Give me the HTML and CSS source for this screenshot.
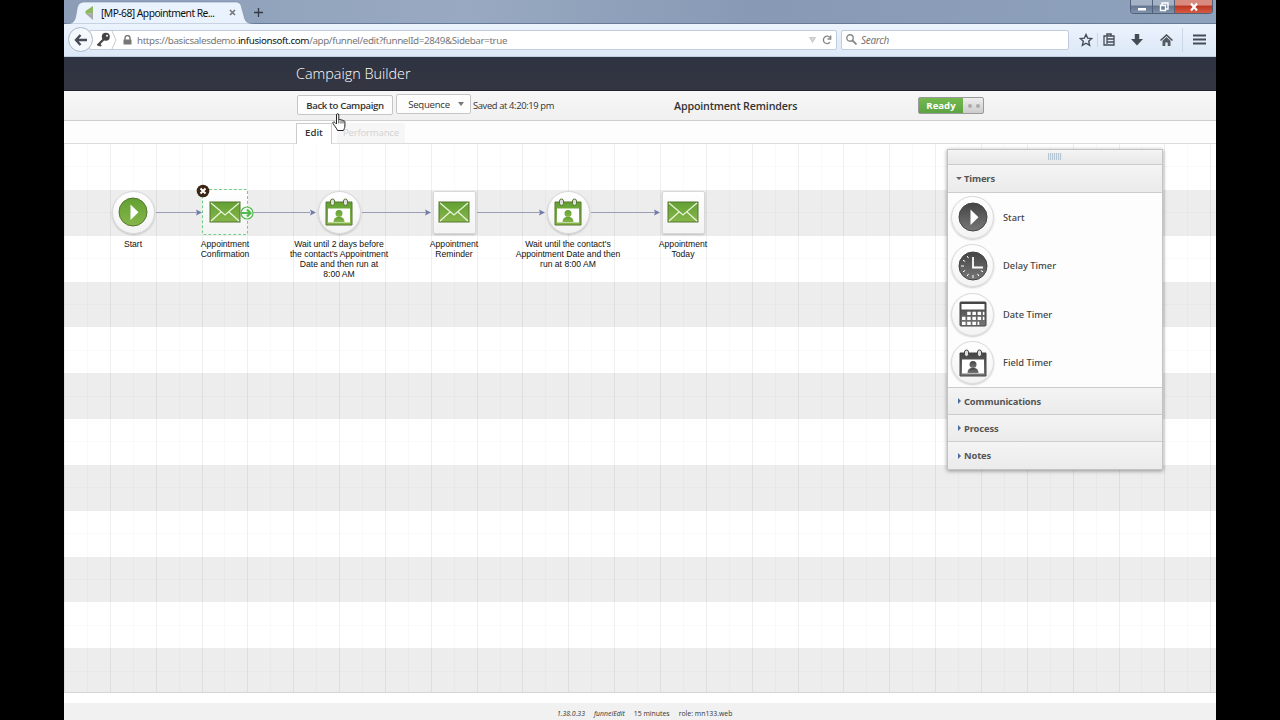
FILE: index.html
```html
<!DOCTYPE html>
<html lang="en">
<head>
    <meta charset="utf-8">
    <title>Campaign Builder</title>
    <link rel="stylesheet" href="styles.css">
</head>
<body>
    <!-- shared icon shapes -->
    <svg class="defs" width="0" height="0">
        <defs>
            <linearGradient id="greenFill" x1="0" y1="0" x2="0" y2="1">
                <stop offset="0" stop-color="#62a032"/>
                <stop offset="1" stop-color="#87b64a"/>
            </linearGradient>
            <linearGradient id="greyFill" x1="0" y1="0" x2="0" y2="1">
                <stop offset="0" stop-color="#444"/>
                <stop offset="1" stop-color="#777"/>
            </linearGradient>
        </defs>
        <symbol id="play" viewBox="0 0 30 30">
            <circle class="fill line" cx="15" cy="15" r="14"/>
            <path d="M12.500 7.500v15.500l8-7.700z" fill="#fff"/>
        </symbol>
        <symbol id="mail" viewBox="0 0 32 22">
            <rect class="fill line" x="1" y="1" width="30" height="20"/>
            <path d="M2 2l14 12L30 2M2 20l10-9M30 20l-10-9" fill="none" stroke="#e9f3dd" stroke-width="1.300"/>
        </symbol>
        <symbol id="contact" viewBox="0 0 28 28">
            <path class="fill line" d="M1 4h26v23H1z"/>
            <rect x="3" y="10.500" width="22" height="14" fill="#fff"/>
            <rect class="line" x="5.500" y="1" width="4" height="6.500" rx="2" fill="#dedede"/>
            <rect class="line" x="18.500" y="1" width="4" height="6.500" rx="2" fill="#dedede"/>
            <circle class="fill" cx="14" cy="15.500" r="3.500"/>
            <path class="fill" d="M8.500 24c0-3 1.500-4.500 4-5h3c2.500 .5 4 2 4 5z"/>
        </symbol>
        <symbol id="clock" viewBox="0 0 30 30">
            <circle class="fill line" cx="15" cy="15" r="14"/>
            <path d="M15 6v10.500h10" fill="none" stroke="#fff" stroke-width="1.800"/>
            <path d="M15 24v3M3 15h3M19.500 22.800l1.300 2.200M10.500 22.800l-1.300 2.200M7.200 19.500L5 20.800M22.800 19.500l2.200 1.300M7.200 10.500L5 9.200M10.500 7.200L9.200 5" fill="none" stroke="#fff"/>
        </symbol>
        <symbol id="calendar" viewBox="0 0 28 26">
            <rect class="fill line" x="1" y="1" width="26" height="24" rx="1"/>
            <rect x="2.500" y="3" width="23" height="5.500" fill="#fff"/>
            <path d="M8.200 12.300h17.200M3 17.300h22.400M3 22.300h17.200" stroke="#fff" stroke-width="3.300" stroke-dasharray="3.500 1.700" fill="none"/>
        </symbol>
    </svg>

    <div class="window">
        <div class="titlebar">
            <svg class="tab-shape" width="200" height="24" viewBox="0 0 200 24">
                <path d="M0 24c7 0 9-3 10-9l1-6c1-5 3-7 8-7h150c5 0 6 2 7 7l2 7c1 6 4 8 11 8z" fill="#eaf2fd" stroke="#7b8ca6" stroke-width=".6"/>
            </svg>
            <div class="tab">
                <svg width="9" height="14" viewBox="0 0 9 14">
                    <path d="M8 0v7L1 8C0 6 0 5 2 4z" fill="#8cb75b"/>
                    <path d="M1 8l7-1v7z" fill="#a9aaa7"/>
                </svg>
                <span class="tab-title">[MP-68] Appointment Re...</span>
                <svg width="7" height="7" viewBox="0 0 7 7"><path d="M1 1l5 5M6 1L1 6" stroke="#777" stroke-width="1.700"/></svg>
                <svg class="new-tab" width="9" height="9" viewBox="0 0 9 9"><path d="M4.500 0v9M0 4.500h9" stroke="#333a45" stroke-width="1.300"/></svg>
            </div>
            <div class="window-buttons">
                <span class="win-btn"><svg width="10" height="10" viewBox="0 0 10 10"><rect x="1" y="6" width="8" height="2.500" fill="#fff"/></svg></span>
                <span class="win-btn"><svg width="10" height="10" viewBox="0 0 10 10"><path d="M3 3V1h6v6H7M1.500 3.500h5v5h-5z" fill="none" stroke="#fff" stroke-width="1.400"/></svg></span>
                <span class="win-btn close"><svg width="10" height="10" viewBox="0 0 10 10"><path d="M2 1.500l6 7M8 1.500l-6 7" stroke="#fff" stroke-width="2.200"/></svg></span>
            </div>
        </div>

        <div class="toolbar">
            <span class="back"><svg width="14" height="12" viewBox="0 0 14 12"><path d="M6.500 1L2 6l4.500 5M2 6h11" fill="none" stroke="#454c55" stroke-width="2.400"/></svg></span>
            <div class="address">
                <svg width="15" height="15" viewBox="0 0 15 15"><circle cx="9.800" cy="4.800" r="4" fill="#444"/><circle cx="11" cy="3.800" r="1" fill="#fff"/><path d="M7.500 7.500L1.500 13.500M3 12l2 2" stroke="#444" stroke-width="2.200"/></svg>
                <svg class="chevron" width="6" height="18" viewBox="0 0 6 18"><path d="M1 0l4 9-4 9" fill="none" stroke="#c7cbd1"/></svg>
                <svg class="lock" width="9" height="10" viewBox="0 0 9 10"><path d="M2 5V3a2.500 2.500 0 0 1 5 0v2" fill="none" stroke="#777" stroke-width="1.400"/><rect x=".5" y="4.500" width="8" height="5" rx=".5" fill="#777"/></svg>
                <span class="url">https://basicsalesdemo.<b>infusionsoft.com</b>/app/funnel/edit?funnelId=2849&amp;Sidebar=true</span>
                <svg class="drop" width="7" height="6" viewBox="0 0 7 6"><path d="M.5.5h6l-3 5z" fill="#d5d5d5" stroke="#bbb" stroke-width=".7"/></svg>
                <svg width="10" height="10" viewBox="0 0 10 10"><path d="M8 7.200A3.700 3.700 0 1 1 8 2.600M8.700.5v3.500H5.500" fill="none" stroke="#858585" stroke-width="1.300"/></svg>
            </div>
            <div class="search">
                <svg width="11" height="11" viewBox="0 0 11 11"><circle cx="4" cy="4" r="3.200" fill="none" stroke="#888" stroke-width="1.400"/><path d="M6.500 6.500l4 4" stroke="#888" stroke-width="1.800"/></svg>
                <span>Search</span>
            </div>
            <div class="tools">
                <svg width="14" height="14" viewBox="0 0 14 14"><path d="M7 1.500l1.700 3.700 4 .4-3 2.700.9 4L7 10.200l-3.600 2.100.9-4-3-2.700 4-.4z" fill="none" stroke="#454c55" stroke-width="1.400"/></svg>
                <i class="divider"></i>
                <svg width="12" height="13" viewBox="0 0 12 13"><path d="M1 3h10v9H1zM3.500 6h7M3.500 9h7M4 4v7" fill="none" stroke="#454c55" stroke-width="1.300"/><path d="M4 3V1h4v2" fill="none" stroke="#454c55" stroke-width="1.500"/></svg>
                <svg class="download" width="12" height="12" viewBox="0 0 12 12"><path d="M3.800 0h4.400v5H12L6 11.500 0 5h3.800z" fill="#454c55"/></svg>
                <svg class="home" width="13" height="12" viewBox="0 0 13 12"><path d="M.5 6.500l6-5.500 6 5.500" fill="none" stroke="#454c55" stroke-width="1.500"/><path d="M2.500 6.700l4-3.700 4 3.700V12H7.700V8.500H5.300V12H2.500z" fill="#555c65"/></svg>
                <i class="divider tall"></i>
                <svg width="13" height="11" viewBox="0 0 13 11"><path d="M0 1.500h13M0 5.500h13M0 9.500h13" stroke="#454c55" stroke-width="2"/></svg>
            </div>
        </div>

        <div class="app-header"><h1>Campaign Builder</h1></div>

        <div class="action-bar">
            <button class="btn bold">Back to Campaign</button>
            <button class="btn sequence">Sequence <i class="caret"></i></button>
            <span class="saved">Saved at 4:20:19 pm</span>
            <h2>Appointment Reminders</h2>
            <div class="status"><span>Ready</span><i></i></div>
        </div>

        <div class="tabs">
            <span class="active">Edit</span>
            <span class="disabled">Performance</span>
        </div>

        <div class="canvas">
            <svg class="links" width="700" height="140" viewBox="0 0 700 140">
                <g stroke="#9a9db3" stroke-width="1">
                    <path d="M92 68.500h42M189 68.500h57M298 68.500h64M413 68.500h64M527 68.500h64"/>
                </g>
                <g fill="#717caa">
                    <path d="M132 65.500l6 3-6 3 1-3zM246 65.500l6 3-6 3 1-3zM361 65.500l6 3-6 3 1-3zM475 65.500l6 3-6 3 1-3zM590 65.500l6 3-6 3 1-3z"/>
                </g>
            </svg>

            <div class="node start">
                <span class="disc"><svg width="30" height="30"><use href="#play"/></svg></span>
                <p>Start</p>
            </div>
            <div class="node confirmation">
                <span class="tile selected"><svg width="32" height="22"><use href="#mail"/></svg></span>
                <svg class="remove" width="14" height="14" viewBox="0 0 14 14"><circle cx="7" cy="7" r="6.300" fill="#3d2514"/><path d="M4.500 4.500l5 5M9.500 4.500l-5 5" stroke="#fff" stroke-width="2"/></svg>
                <svg class="connect" width="14" height="14" viewBox="0 0 14 14"><circle cx="7" cy="7" r="6" fill="#f0faed" stroke="#54b950" stroke-width="1.200"/><path d="M1 7h9M7 3.500L10.500 7 7 10.500" fill="none" stroke="#54b950" stroke-width="2.200"/></svg>
                <p>Appointment<br>Confirmation</p>
            </div>
            <div class="node wait-before">
                <span class="disc"><svg width="28" height="28"><use href="#contact"/></svg></span>
                <p>Wait until 2 days before<br>the contact's Appointment<br>Date and then run at<br>8:00 AM</p>
            </div>
            <div class="node reminder">
                <span class="tile"><svg width="32" height="22"><use href="#mail"/></svg></span>
                <p>Appointment<br>Reminder</p>
            </div>
            <div class="node wait-day">
                <span class="disc"><svg width="28" height="28"><use href="#contact"/></svg></span>
                <p>Wait until the contact's<br>Appointment Date and then<br>run at 8:00 AM</p>
            </div>
            <div class="node today">
                <span class="tile"><svg width="32" height="22"><use href="#mail"/></svg></span>
                <p>Appointment<br>Today</p>
            </div>

            <div class="palette">
                <div class="grip"><i></i></div>
                <h3 class="open">Timers</h3>
                <ul>
                    <li><span class="disc"><svg width="30" height="30"><use href="#play"/></svg></span>Start</li>
                    <li><span class="disc"><svg width="30" height="30"><use href="#clock"/></svg></span>Delay Timer</li>
                    <li><span class="disc"><svg width="28" height="26"><use href="#calendar"/></svg></span>Date Timer</li>
                    <li><span class="disc"><svg width="28" height="28"><use href="#contact"/></svg></span>Field Timer</li>
                </ul>
                <h3>Communications</h3>
                <h3>Process</h3>
                <h3>Notes</h3>
            </div>
        </div>

        <div class="footer">
            <em>1.38.0.33</em>
            <em>funnelEdit</em>
            <span>15 minutes</span>
            <span>role: mn133.web</span>
        </div>

        <svg class="pointer" width="14" height="19" viewBox="0 0 14 19">
            <path d="M4.500 11V2c0-1.700 2.300-1.700 2.300 0v5c.5-1 2-.8 2.200.3.600-.8 1.900-.5 2 .6.800-.6 1.900 0 1.900 1v4.100c0 2-1 3-1.500 4.500H5.500C4.500 15 2.500 13 1 10.500c-.7-1.500 1-2.200 2-1z" fill="#fff" stroke="#222"/>
            <path d="M6.800 7v3.500M9 7.500v3M11 8v2.500" stroke="#222" stroke-width=".8"/>
        </svg>
    </div>
</body>
</html>
```
FILE: styles.css
```css
* {
    box-sizing: border-box;
}

body {
    margin: 0;
    background: #000;
    font-family: "Open Sans", sans-serif;
    color: #333;
}

h1, h2, h3, p, ul {
    margin: 0;
    padding: 0;
}

svg {
    display: block;
    flex: none;
}

.defs {
    position: absolute;
}

.window {
    position: relative;
    display: flex;
    flex-direction: column;
    width: 1152px;
    height: 720px;
    margin: 0 auto;
    background: #fff;
    overflow: hidden;
}

/* browser */
.titlebar {
    position: relative;
    display: flex;
    justify-content: space-between;
    height: 24px;
    background: linear-gradient(90deg, #8c9db8, #98a9c1 35%, #8799b4 60%, #8fa2bc);
    border-bottom: 1px solid #667b98;
}

.tab-shape {
    position: absolute;
    left: 2px;
    top: 0;
}

.tab {
    position: relative;
    display: flex;
    align-items: center;
    height: 25px;
    padding-left: 21px;
}

.tab-title {
    width: 125px;
    margin: 0 3px 0 7px;
    font: 10.3px "Noto Sans", sans-serif;
    letter-spacing: -.54px;
    color: #111;
    white-space: nowrap;
}

.tab .new-tab {
    margin-left: 18px;
}

.window-buttons {
    display: flex;
    height: 14px;
    margin-right: 3px;
    border: 1px solid #52617a;
    border-top: 0;
    border-radius: 0 0 4px 4px;
    overflow: hidden;
}

.win-btn {
    display: flex;
    align-items: center;
    justify-content: center;
    width: 22px;
    background: linear-gradient(#a5b2c6 40%, #64758f 45%, #8193ac);
    border-right: 1px solid #52617a;
}

.win-btn.close {
    width: 37px;
    background: linear-gradient(#d98b7f 40%, #bd3521 45%, #d65b42);
    border: 0;
}

.toolbar {
    display: flex;
    align-items: center;
    height: 33px;
    padding: 0 10px 0 4px;
    background: linear-gradient(#ecf3fd, #dce8f7);
    border-bottom: 1px solid #c0cfdf;
}

.back {
    z-index: 1;
    display: flex;
    flex: none;
    align-items: center;
    justify-content: center;
    width: 25px;
    height: 25px;
    margin-right: -4px;
    background: #f5f9fe;
    border: 1px solid #a9b8cc;
    border-radius: 50%;
}

.address, .search {
    display: flex;
    flex: none;
    align-items: center;
    height: 20px;
    background: #fff;
    border: 1px solid #c2cddc;
    border-radius: 2px;
}

.address {
    width: 748px;
    padding: 0 4px 0 6px;
}

.lock {
    margin: 0 5px 0 6px;
}

.url {
    flex: 1;
    padding-top: 1px;
    font: 9.8px "Noto Sans", sans-serif;
    letter-spacing: -.37px;
    color: #777;
    white-space: nowrap;
}

.url b {
    font-weight: 400;
    color: #111;
}

.drop {
    margin-right: 6px;
}

.search {
    width: 228px;
    margin-left: 4px;
    padding-left: 4px;
    font: italic 10px "Noto Sans", sans-serif;
    letter-spacing: -.3px;
    color: #777;
}

.search span {
    margin-left: 4px;
}

.tools {
    display: flex;
    flex: 1;
    align-items: center;
    margin-left: 10px;
}

.divider {
    width: 1px;
    height: 14px;
    margin: 0 5px 0 4px;
    background: #ccd7e5;
}

.divider.tall {
    height: 24px;
    margin: 0 10px 0 9px;
}

.download {
    margin-left: 16px;
}

.home {
    margin-left: 17px;
}

/* campaign builder */
.app-header {
    height: 34px;
    padding-left: 232px;
    background: linear-gradient(#2e3442, #343541);
    border-bottom: 1px solid #22242d;
}

h1 {
    font-size: 14.4px;
    font-weight: 300;
    line-height: 34px;
    color: #fff;
}

.action-bar {
    display: flex;
    align-items: center;
    height: 30px;
    padding-left: 233px;
    background: linear-gradient(#f7f7f7, #f0f0f1);
    border-bottom: 1px solid #cfcfcf;
    font-size: 9.4px;
    white-space: nowrap;
}

.btn {
    width: 96px;
    height: 20px;
    padding: 0;
    background: #fdfdfd;
    border: 1px solid #c6c6c6;
    border-radius: 2px;
    font: 9.6px "Open Sans", sans-serif;
    letter-spacing: -.25px;
    color: #333;
}

.btn.bold {
    font-weight: 600;
    letter-spacing: -.35px;
}

.btn.sequence {
    display: flex;
    align-items: center;
    justify-content: center;
    gap: 8px;
    width: 75px;
    margin: -2px 2px 0 3px;
    padding-left: 5px;
}

.caret {
    border: 3px solid transparent;
    border-top: 4px solid #777;
    border-bottom: 0;
}

.saved {
    width: 201px;
    letter-spacing: -.37px;
}

h2 {
    width: 244px;
    padding-top: 1px;
    font-size: 10.7px;
    font-weight: 600;
    letter-spacing: -.16px;
}

.status {
    display: flex;
    width: 66px;
    height: 17px;
    border: 1px solid #9a9a9a;
    border-radius: 2px;
    background: linear-gradient(#eee, #ccc);
}

.status span {
    width: 44px;
    background: linear-gradient(#74b84f, #5ca341);
    color: #fff;
    font-size: 9.6px;
    font-weight: 700;
    line-height: 15px;
    text-align: center;
}

.status i {
    width: 4px;
    height: 4px;
    margin: 6px 0 0 5px;
    border-radius: 50%;
    background: #aaa;
    box-shadow: 8px 0 #aaa;
}

.tabs {
    display: flex;
    align-items: flex-end;
    gap: 5px;
    height: 23px;
    padding-left: 232px;
    background: #fdfdfd;
    border-bottom: 1px solid #ddd;
    font-size: 9.6px;
    line-height: 18px;
    text-align: center;
}

.tabs .active {
    width: 36px;
    height: 21px;
    margin-bottom: -1px;
    background: #fff;
    border: 1px solid #ccc;
    border-bottom: 0;
    font-weight: 600;
}

.tabs .disabled {
    width: 68px;
    height: 20px;
    background: #f6f6f6;
    color: #d2d2d2;
    line-height: 20px;
    letter-spacing: -.2px;
}

.canvas {
    position: relative;
    height: 550px;
    background:
        repeating-linear-gradient(90deg, rgba(0, 0, 0, .045) 0 1px, transparent 1px 45.850px),
        repeating-linear-gradient(90deg, rgba(0, 0, 0, .02) 0 1px, transparent 1px 22.925px),
        repeating-linear-gradient(transparent 0 22.400px, rgba(0, 0, 0, .02) 22.400px 23.400px, transparent 23.400px 45.850px),
        repeating-linear-gradient(#fff 0 45.850px, #ededed 45.850px 91.700px);
    border-bottom: 1px solid #d6d6d6;
}

.links {
    position: absolute;
    left: 0;
    top: 0;
}

.node {
    position: absolute;
    top: 47px;
    display: flex;
    flex-direction: column;
    align-items: center;
    width: 120px;
    --icon: url(#greenFill);
    --edge: #56772f;
}

.node p {
    margin-top: 5px;
    font: 8.600px/10px "Liberation Sans", sans-serif;
    color: #111;
    text-align: center;
    white-space: nowrap;
}

.start { left: 9px; }
.confirmation { left: 101px; }
.wait-before { left: 215px; }
.reminder { left: 330px; }
.wait-day { left: 444px; }
.today { left: 559px; }

.fill {
    fill: var(--icon);
}

.line {
    stroke: var(--edge);
}

.disc, .tile {
    display: flex;
    align-items: center;
    justify-content: center;
    width: 43px;
    height: 43px;
    background: linear-gradient(#fff, #f3f3f3);
    border: 1px solid #d8d8d8;
    box-shadow: 0 1px 2px rgba(0, 0, 0, .2);
}

.disc {
    border-radius: 50%;
}

.tile {
    border-radius: 2px;
}

.tile.selected {
    width: 46px;
    height: 46px;
    margin: -2px 0 -1px;
    border: 1px dashed #76cd8b;
    box-shadow: none;
}

.remove {
    position: absolute;
    left: 31px;
    top: -7px;
}

.connect {
    position: absolute;
    left: 75px;
    top: 15px;
}

.palette {
    position: absolute;
    left: 883px;
    top: 5px;
    width: 216px;
    background: #fdfdfd;
    border: 1px solid #c3c3c3;
    box-shadow: 0 1px 4px rgba(0, 0, 0, .4);
    --icon: url(#greyFill);
    --edge: #444;
}

.grip {
    display: flex;
    align-items: center;
    justify-content: center;
    height: 15px;
    background: linear-gradient(#f4f4f4, #e8e8e8);
    border-bottom: 1px solid #ccc;
}

.grip i {
    width: 14px;
    height: 7px;
    background: repeating-linear-gradient(90deg, #b6c6d2 0 1px, #e4eaee 1px 2px);
}

h3 {
    display: flex;
    align-items: center;
    height: 27.300px;
    padding-left: 10px;
    background: linear-gradient(#f4f4f4, #ebebeb);
    border-top: 1px solid #ccc;
    font: bold 9.300px "Noto Sans", sans-serif;
    letter-spacing: -.1px;
    color: #555;
}

h3::before {
    content: "";
    margin-right: 3px;
    border: 3px solid transparent;
    border-left: 3px solid #4a6e9c;
    border-right: 0;
}

h3.open {
    height: 28px;
    padding-left: 8px;
    border-top: 0;
    border-bottom: 1px solid #ccc;
}

h3.open::before {
    margin-right: 2px;
    border: 3px solid transparent;
    border-top: 3px solid #666;
    border-bottom: 0;
}

.palette ul {
    list-style: none;
    padding: 0 0 0 3px;
}

.palette li {
    display: flex;
    align-items: center;
    gap: 9px;
    height: 48.500px;
    font: 500 9.300px "Noto Sans", sans-serif;
    color: #444;
}

.footer {
    display: flex;
    gap: 9px;
    height: 17px;
    margin-top: 10px;
    padding-left: 493px;
    background: #f1f1f1;
    font-size: 6.900px;
    line-height: 22px;
    color: #333;
    white-space: nowrap;
}

.pointer {
    position: absolute;
    left: 268px;
    top: 113px;
}
```
